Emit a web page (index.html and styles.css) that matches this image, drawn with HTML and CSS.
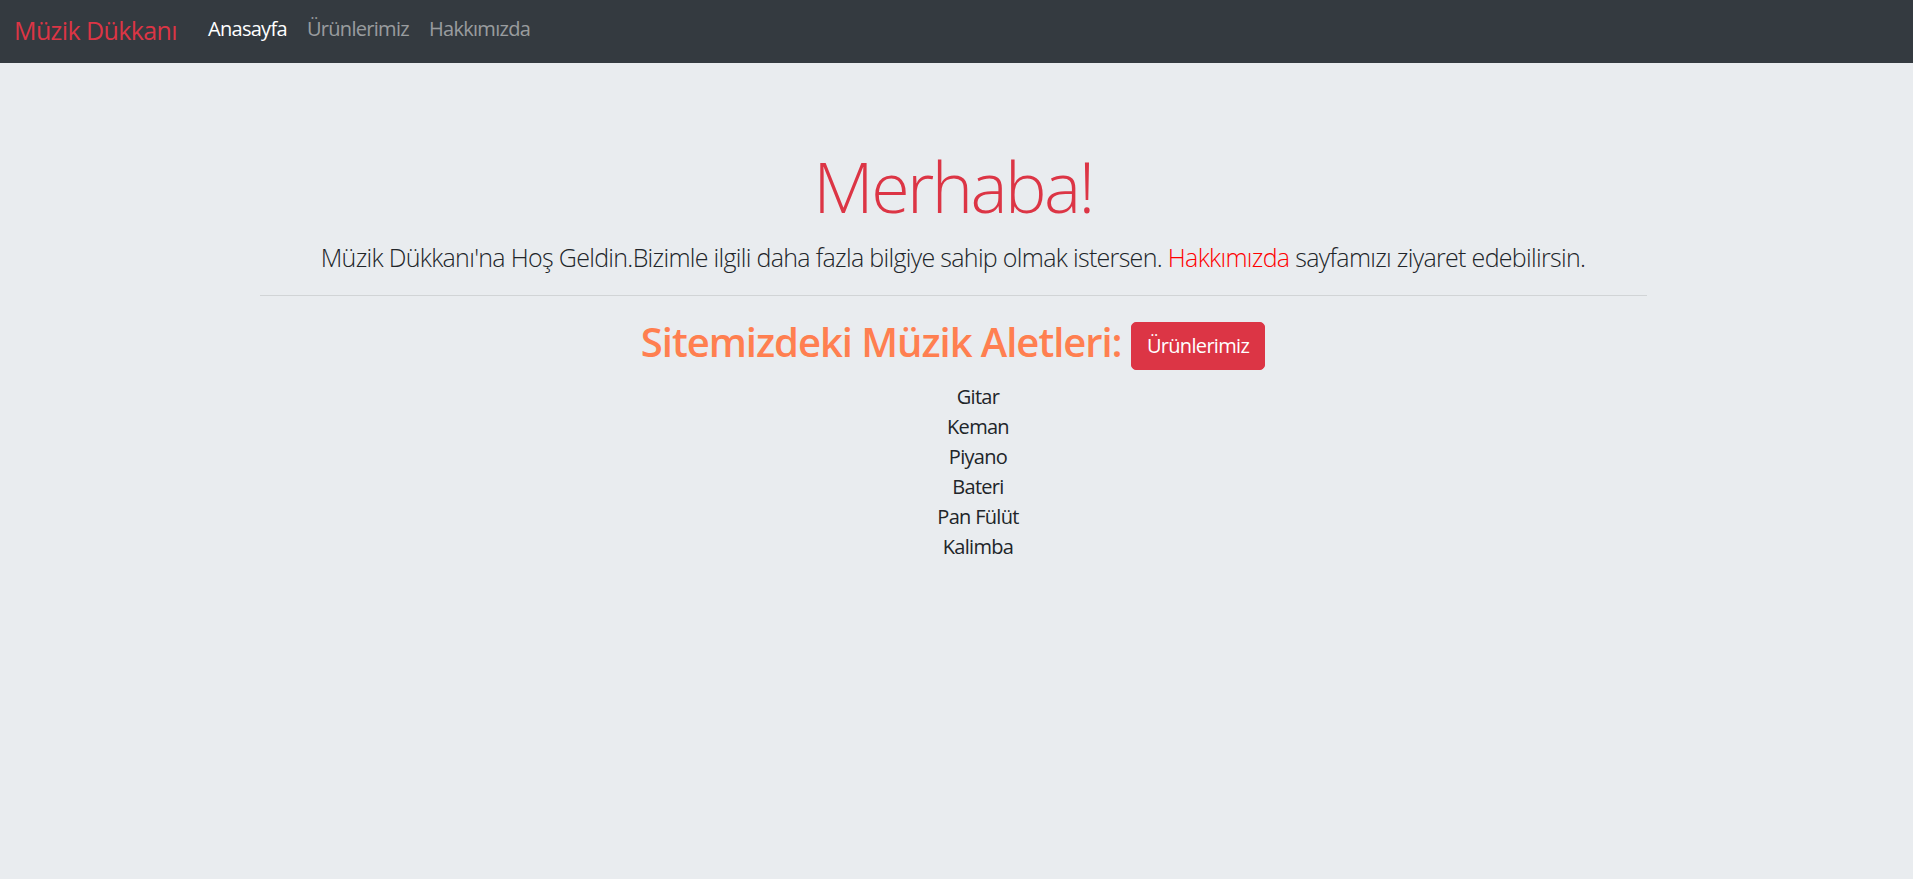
FILE: index.html
```html
<!DOCTYPE html>
<html lang="tr">
<head>
<meta charset="utf-8">
<title>Müzik Dükkanı</title>
<link rel="stylesheet" href="styles.css">
</head>
<body>
<nav class="navbar">
  <a class="brand" href="#">Müzik Dükkanı</a>
  <ul class="nav">
    <li><a class="nav-link active" href="#">Anasayfa</a></li>
    <li><a class="nav-link" href="#">Ürünlerimiz</a></li>
    <li><a class="nav-link" href="#">Hakkımızda</a></li>
  </ul>
</nav>
<main class="jumbotron">
  <div class="container">
    <h1 class="display">Merhaba!</h1>
    <p class="lead">Müzik Dükkanı'na Hoş Geldin.Bizimle ilgili daha fazla bilgiye sahip olmak istersen. <a class="lead-link" href="#">Hakkımızda</a> sayfamızı ziyaret edebilirsin.</p>
    <hr class="divider">
    <h2 class="section-title">Sitemizdeki Müzik Aletleri: <a class="btn-danger" href="#">Ürünlerimiz</a></h2>
    <ul class="instruments">
      <li>Gitar</li>
      <li>Keman</li>
      <li>Piyano</li>
      <li>Bateri</li>
      <li>Pan Fülüt</li>
      <li>Kalimba</li>
    </ul>
  </div>
</main>
</body>
</html>
```
FILE: styles.css
```css
* { box-sizing: border-box; }
html, body { margin: 0; padding: 0; }
body {
  background: #e9ecef;
  color: #212529;
  font-family: "Open Sans", "Noto Sans", "Liberation Sans", sans-serif;
  font-size: 20px;
  line-height: 30px;
  letter-spacing: -0.035em;
  min-height: 879px;
}
a { text-decoration: none; }

.navbar {
  height: 63px;
  background: #343a40;
  display: flex;
  align-items: center;
  padding: 0 14px 4px;
}
.brand {
  color: #dc3545;
  font-size: 25px;
  line-height: 38px;
  letter-spacing: -0.024em;
  margin-right: 21px;
  white-space: nowrap;
}
.nav {
  list-style: none;
  display: flex;
  margin: 0 0 1px;
  padding: 0;
}
.nav-link {
  display: block;
  padding: 0 10px;
  color: rgba(255, 255, 255, 0.5);
  font-size: 20px;
  line-height: 30px;
}
.nav-link.active { color: #fff; }

.jumbotron { padding-top: 80px; }
.container {
  width: 1387px;
  margin-left: calc(50% - 697px);
  text-align: center;
}
.display {
  margin: 0 0 9px;
  padding-top: 1px;
  color: #dc3545;
  font-size: 70px;
  font-weight: 300;
  line-height: 85px;
  letter-spacing: -0.037em;
}
.lead {
  margin: 0;
  font-size: 25px;
  font-weight: 300;
  line-height: 38px;
  letter-spacing: -0.0275em;
}
.lead-link { color: #ff0000; }
.divider {
  margin: 19px 0 22px;
  border: 0;
  border-top: 1px solid rgba(0, 0, 0, 0.1);
}
.section-title {
  margin: 0 0 12px;
  color: #ff7f50;
  font-size: 40px;
  font-weight: 600;
  line-height: 48px;
  letter-spacing: -0.026em;
}
.btn-danger {
  display: inline-block;
  vertical-align: 4px;
  background: #dc3545;
  color: #fff;
  border: 1px solid #dc3545;
  border-radius: 5px;
  padding: 8px 15px;
  font-size: 20px;
  font-weight: 400;
  line-height: 30px;
  letter-spacing: -0.034em;
}
.instruments {
  list-style: none;
  margin: 0;
  padding: 0 0 0 50px;
}
.instruments li { line-height: 30px; }
```
